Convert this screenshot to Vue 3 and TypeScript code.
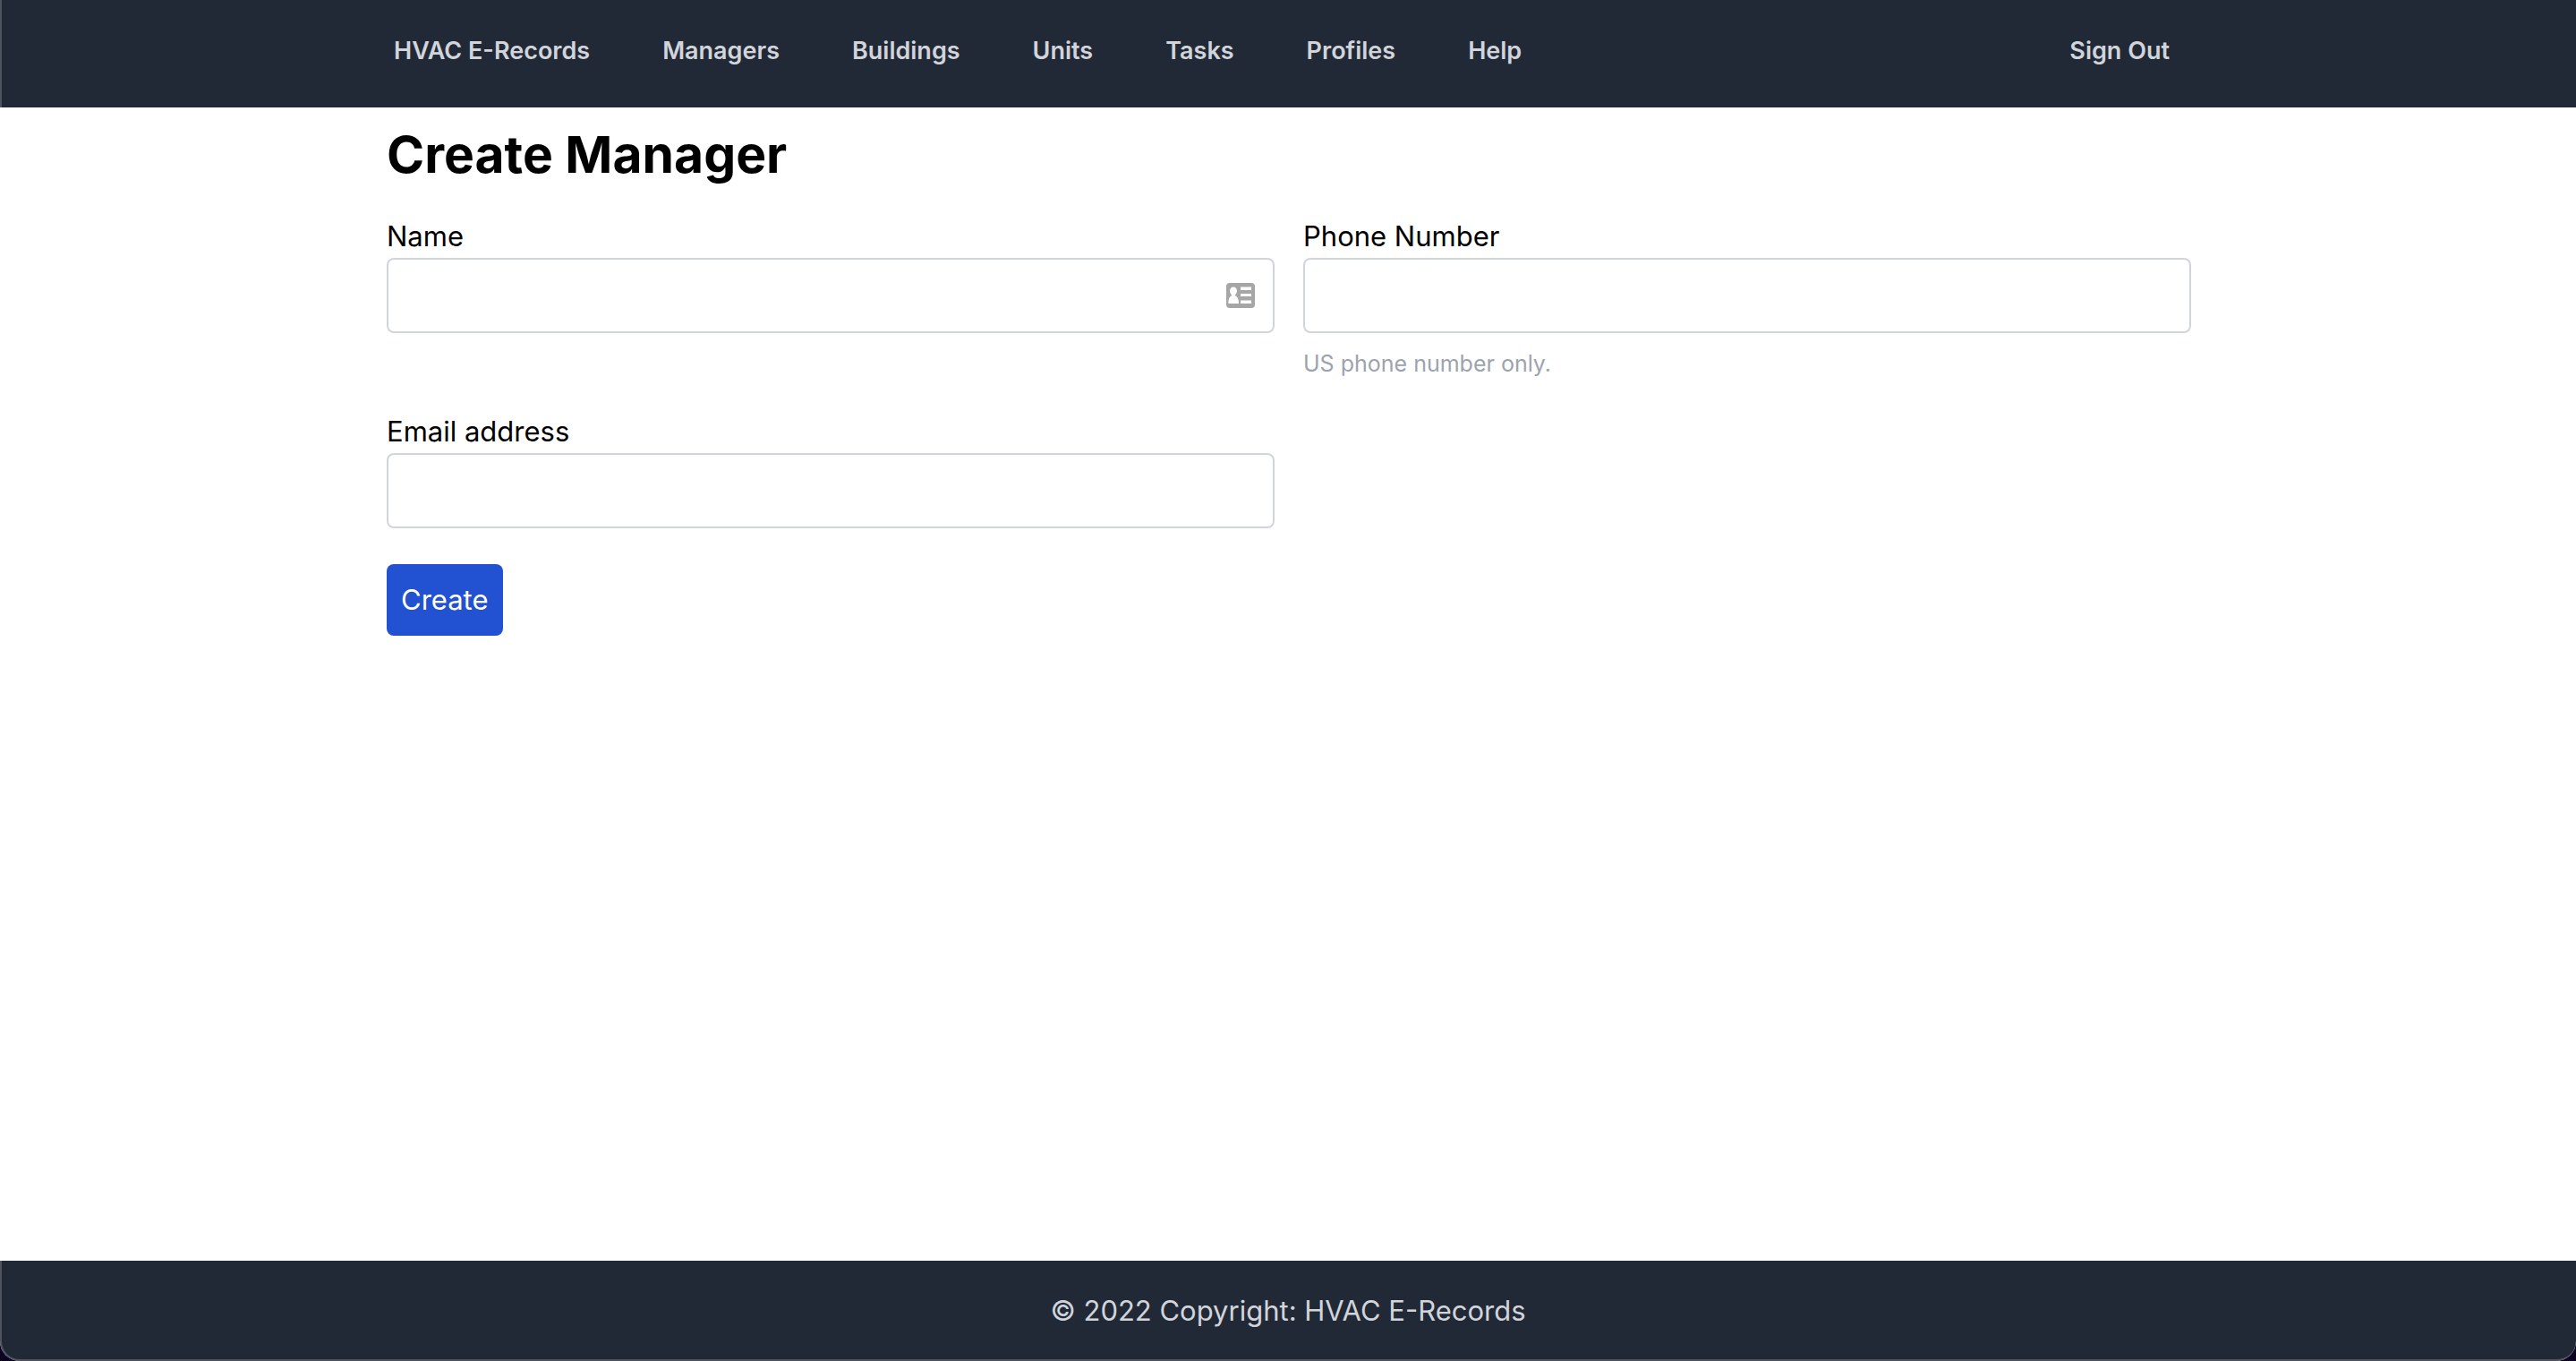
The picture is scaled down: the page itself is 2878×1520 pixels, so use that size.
<script setup lang="ts">
import { ref } from 'vue'

const links: string[] = ['HVAC E-Records', 'Managers', 'Buildings', 'Units', 'Tasks', 'Profiles', 'Help']

const name = ref('')
const phone = ref('')
const email = ref('')
</script>

<template>
  <div class="window">
    <header class="header">
      <nav class="container nav" aria-label="Main">
        <ul class="nav-list">
          <li v-for="link in links" :key="link">
            <a class="nav-link" href="#">{{ link }}</a>
          </li>
        </ul>
        <a class="nav-link" href="#">Sign Out</a>
      </nav>
    </header>

    <main class="main">
      <div class="container">
        <h1 class="title">Create Manager</h1>
        <form class="form" @submit.prevent>
          <div class="fields">
            <div class="field">
              <label for="name">Name</label>
              <div class="control">
                <input id="name" v-model="name" type="text" />
                <svg class="card-icon" viewBox="0 0 32 28" aria-hidden="true">
                  <rect width="32" height="28" rx="4" fill="#a6a6a6" />
                  <g fill="#fff">
                    <ellipse cx="8" cy="9" rx="4" ry="4.5" />
                    <path d="M6 12h4v2c2.600 1 4 4 4 9H2.300c0-5 1.400-8 3.700-9z" />
                    <rect x="16" y="4.500" width="12" height="3.500" />
                    <rect x="16" y="12" width="12" height="3" />
                    <rect x="16" y="19.500" width="12" height="3.500" />
                  </g>
                </svg>
              </div>
            </div>
            <div class="field">
              <label for="phone">Phone Number</label>
              <input id="phone" v-model="phone" type="tel" aria-describedby="phone-hint" />
              <p id="phone-hint" class="hint">US phone number only.</p>
            </div>
            <div class="field">
              <label for="email">Email address</label>
              <input id="email" v-model="email" type="email" />
            </div>
          </div>
          <button class="submit" type="submit">Create</button>
        </form>
      </div>
    </main>

    <footer class="footer">© 2022 Copyright: HVAC E-Records</footer>
  </div>
</template>

<style>
body {
  margin: 0;
  background: #0b0320;
}
</style>

<style scoped>
.window {
  position: relative;
  display: flex;
  flex-direction: column;
  min-height: 100vh;
  overflow: hidden;
  border-radius: 0 0 22px 22px;
  background: #fff;
  color: #000;
  font-family: Inter, "Liberation Sans", sans-serif;
  font-size: 31px;
  line-height: 48px;
}

/* Translucent window edge, visible only over the dark bars */
.window::after {
  content: "";
  position: absolute;
  inset: 0;
  border: solid rgba(255, 255, 255, 0.2);
  border-width: 0 0 2px 2px;
  border-radius: 0 0 22px 22px;
  pointer-events: none;
}

.container {
  box-sizing: border-box;
  width: 100%;
  max-width: 2048px;
  margin: 0 auto;
  padding: 0 16px;
}

.header {
  padding-left: 2px;
  background: #222936;
}

.nav {
  display: flex;
  justify-content: space-between;
  padding: 37px 40px 43px 24px;
}

.nav-list {
  display: flex;
  gap: 81px;
  margin: 0;
  padding: 0;
  list-style: none;
}

.nav-link {
  display: block;
  color: #d1d5db;
  font-size: 27px;
  font-weight: 600;
  line-height: 40px;
  text-decoration: none;
  white-space: nowrap;
}

.main {
  flex: 1;
  padding: 17px 0 32px 2px;
}

.title {
  margin: 0 0 31px;
  font-size: 57px;
  font-weight: 700;
  line-height: 72px;
}

.form {
  display: flex;
  flex-direction: column;
  align-items: flex-start;
  gap: 40px;
}

.fields {
  display: grid;
  grid-template-columns: 1fr 1fr;
  gap: 34px 32px;
  width: 100%;
}

.field {
  display: flex;
  flex-direction: column;
}

.control {
  position: relative;
}

input {
  display: block;
  box-sizing: border-box;
  width: 100%;
  height: 84px;
  padding: 16px;
  border: 2px solid #d1d5db;
  border-radius: 8px;
  background: #fff;
  font: inherit;
}

.card-icon {
  position: absolute;
  top: 28px;
  right: 22px;
  width: 32px;
  height: 28px;
}

.hint {
  margin: 16px 0 0;
  color: #9ca3af;
  font-size: 25px;
  line-height: 36px;
}

.submit {
  padding: 16px;
  border: 0;
  border-radius: 8px;
  background: #2251d1;
  color: #fff;
  font: inherit;
}

.footer {
  padding: 32px;
  background: #222936;
  color: #d1d5db;
  text-align: center;
}
</style>
